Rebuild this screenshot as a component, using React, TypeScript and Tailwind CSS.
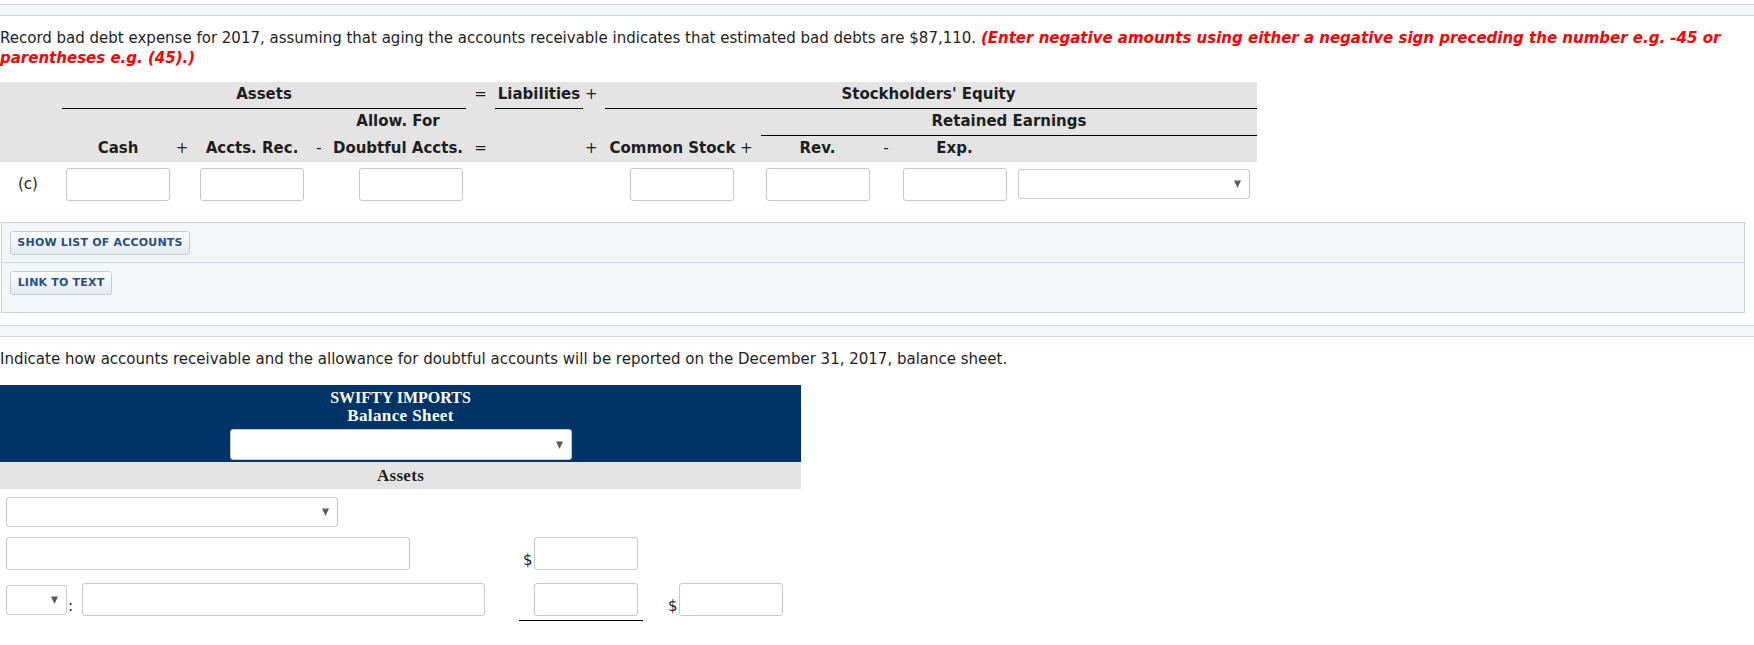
import React from "react";

const inputCls =
  "block rounded-[3px] border border-[#c8c8c8] bg-white outline-none";

function Sel({ className }: { className: string }) {
  return (
    <div
      className={`flex items-center justify-end rounded-[3px] border border-[#c8c8c8] bg-white pr-[8px] ${className}`}
    >
      <svg width="7" height="8" viewBox="0 0 7 8">
        <path d="M0 0.5H7L3.5 8Z" fill="#5c5c5c" />
      </svg>
    </div>
  );
}

function Btn({ children, className }: { children: React.ReactNode; className: string }) {
  return (
    <button
      className={`flex h-[24px] items-center justify-center rounded-[3px] border border-[#c3cdd9] bg-linear-to-b from-[#fbfcfd] to-[#e6ebf1] text-[11px] font-bold tracking-[0.2px] text-[#264f86] shadow-[inset_0_1px_0_#ffffff] ${className}`}
    >
      {children}
    </button>
  );
}

export default function App() {
  const cols =
    "grid grid-cols-[62px_112px_22px_112px_22px_136px_29px_88px_22px_135px_21px_113px_24px_113px_246px]";
  return (
    <div className="w-[1754px] bg-white pb-[20px] font-['DejaVu_Sans',Verdana,sans-serif] text-[#1e1e1e]">
      <div className="mt-[4px] h-[12px] border-y border-[#cdd4de] bg-[#f4f7fa]" />

      <p className="mt-[12px] whitespace-nowrap text-[15px] leading-[20px]">
        Record bad debt expense for 2017, assuming that aging the accounts receivable indicates that estimated bad
        debts are $87,110.{" "}
        <span className="font-bold italic text-[#ff0000]">
          (Enter negative amounts using either a negative sign preceding the number e.g. -45 or
          <br />
          parentheses e.g. (45).)
        </span>
      </p>

      <div className="mt-[14px] w-[1257px]">
        <div className={`${cols} bg-[#e4e4e4] text-[15px] font-bold`}>
          {/* row 1 */}
          <div className="h-[27px]" />
          <div className="col-span-5 flex h-[27px] items-center justify-center border-b border-black pb-[2px]">
            Assets
          </div>
          <div className="flex h-[27px] items-center justify-center pb-[2px] font-normal">=</div>
          <div className="flex h-[27px] items-center justify-center border-b border-black pb-[2px]">
            Liabilities
          </div>
          <div className="flex h-[27px] items-center pb-[2px] pl-[2px] font-normal">+</div>
          <div className="col-span-6 flex h-[27px] items-center justify-center border-b border-black pb-[2px] pr-[5px]">
            Stockholders&#39; Equity
          </div>

          {/* row 2 */}
          <div className="col-span-5 h-[27px]" />
          <div className="flex h-[27px] items-center justify-center pb-[2px]">Allow. For</div>
          <div className="col-span-5 h-[27px]" />
          <div className="col-span-4 flex h-[27px] items-center justify-center border-b border-black pb-[2px]">
            Retained Earnings
          </div>

          {/* row 3 */}
          <div className="h-[26px]" />
          <div className="flex h-[26px] items-center justify-center pb-[2px]">Cash</div>
          <div className="flex h-[26px] items-center justify-center pb-[2px] pr-[6px] font-normal">+</div>
          <div className="flex h-[26px] items-center justify-center pb-[2px]">Accts. Rec.</div>
          <div className="flex h-[26px] items-center justify-center pb-[2px] font-normal">-</div>
          <div className="flex h-[26px] items-center justify-center pb-[2px]">Doubtful Accts.</div>
          <div className="flex h-[26px] items-center justify-center pb-[2px] font-normal">=</div>
          <div className="h-[26px]" />
          <div className="flex h-[26px] items-center pb-[2px] pl-[2px] font-normal">+</div>
          <div className="flex h-[26px] items-center justify-center pb-[2px]">Common Stock</div>
          <div className="flex h-[26px] items-center pb-[2px] font-normal">+</div>
          <div className="flex h-[26px] items-center justify-center pb-[2px]">Rev.</div>
          <div className="flex h-[26px] items-center justify-center pb-[2px] font-normal">-</div>
          <div className="flex h-[26px] items-center justify-center pb-[2px]">Exp.</div>
          <div className="h-[26px]" />
        </div>

        <div className={`${cols} h-[39px] items-start pt-[6px]`}>
          <div className="flex h-[33px] items-center pl-[18px] text-[15px]">(c)</div>
          <div className="flex justify-center">
            <input className={`${inputCls} h-[33px] w-[104px]`} readOnly />
          </div>
          <div />
          <div className="flex justify-center">
            <input className={`${inputCls} h-[33px] w-[104px]`} readOnly />
          </div>
          <div />
          <div className="flex justify-end pr-[3px]">
            <input className={`${inputCls} h-[33px] w-[104px]`} readOnly />
          </div>
          <div />
          <div />
          <div />
          <div className="flex justify-end pr-[6px]">
            <input className={`${inputCls} h-[33px] w-[104px]`} readOnly />
          </div>
          <div />
          <div className="flex pl-[5px]">
            <input className={`${inputCls} h-[33px] w-[104px]`} readOnly />
          </div>
          <div />
          <div className="flex pl-[5px]">
            <input className={`${inputCls} h-[33px] w-[104px]`} readOnly />
          </div>
          <div className="flex pl-[7px] pt-[1px]">
            <Sel className="h-[30px] w-[232px]" />
          </div>
        </div>
      </div>

      <div className="ml-px mt-[21px] w-[1744px] border border-[#c9d2de] bg-[#f4f7fa]">
        <div className="border-b border-[#c9d2de] pb-[7px] pl-[8px] pt-[8px]">
          <Btn className="w-[180px]">SHOW LIST OF ACCOUNTS</Btn>
        </div>
        <div className="pb-[17px] pl-[8px] pt-[8px]">
          <Btn className="w-[102px]">LINK TO TEXT</Btn>
        </div>
      </div>

      <div className="mt-[12px] h-[12px] border-y border-[#cdd4de] bg-[#f4f7fa]" />

      <p className="mt-[12px] text-[15px] leading-[20px]">
        Indicate how accounts receivable and the allowance for doubtful accounts will be reported on the December 31,
        2017, balance sheet.
      </p>

      <div className="mt-[16px] w-[801px] bg-[#003366] pb-[2px] pt-[4px] text-center font-['Liberation_Serif',serif] font-bold text-white">
        <div className="text-[16px] leading-[18px]">SWIFTY IMPORTS</div>
        <div className="text-[17px] leading-[18px] tracking-[0.4px]">Balance Sheet</div>
        <div className="ml-[230px] mt-[4px]">
          <Sel className="h-[31px] w-[342px]" />
        </div>
      </div>
      <div className="flex h-[27px] w-[801px] items-center justify-center bg-[#e4e4e4] font-['Liberation_Serif',serif] text-[17px] font-bold tracking-[0.3px]">
        Assets
      </div>

      <div className="ml-[6px] mt-[8px]">
        <Sel className="h-[30px] w-[332px]" />
      </div>

      <div className="mt-[10px] flex items-end">
        <input className={`${inputCls} ml-[6px] h-[33px] w-[404px]`} readOnly />
        <span className="ml-[113px] w-[11px] text-[15px] leading-[20px]">$</span>
        <input className={`${inputCls} h-[33px] w-[104px]`} readOnly />
      </div>

      <div className="mt-[13px] flex items-start">
        <div className="ml-[6px] mt-[2px]">
          <Sel className="h-[30px] w-[61px]" />
        </div>
        <span className="mt-[13px] w-[15px] pl-[1px] text-[15px] leading-[20px]">:</span>
        <input className={`${inputCls} h-[33px] w-[403px]`} readOnly />
        <div className="ml-[34px] w-[124px] border-b border-black pb-[4px] pl-[15px]">
          <input className={`${inputCls} h-[33px] w-[104px]`} readOnly />
        </div>
        <span className="ml-[25px] mt-[13px] w-[11px] text-[15px] leading-[20px]">$</span>
        <input className={`${inputCls} h-[33px] w-[104px]`} readOnly />
      </div>
    </div>
  );
}
